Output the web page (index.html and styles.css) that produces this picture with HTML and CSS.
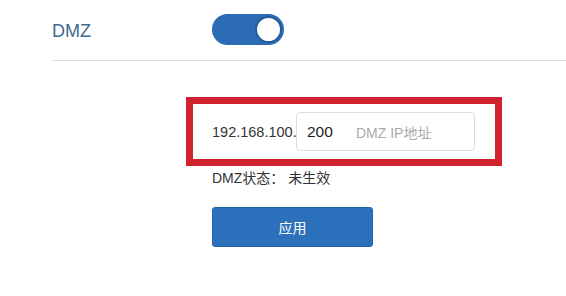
FILE: index.html
```html
<!DOCTYPE html>
<html lang="zh-CN">
<head>
    <meta charset="UTF-8">
    <title>DMZ</title>
    <link rel="stylesheet" href="styles.css">
</head>
<body>

    <div class="row">
        <div class="row-label">DMZ</div>
        <div class="switch on"><span class="knob"></span></div>
    </div>

    <div class="form">
        <div class="highlight">
            <span class="prefix">192.168.100.</span>
            <div class="ip-input">
                <span class="value">200</span>
                <span class="hint">DMZ IP地址</span>
            </div>
        </div>
        <div class="status">DMZ状态： 未生效</div>
        <button class="btn">应用</button>
    </div>

</body>
</html>
```

FILE: styles.css
```css
body {
    margin: 0;
    background: #fff;
    font-family: "Liberation Sans", "Noto Sans CJK SC", sans-serif;
    font-size: 14px;
    color: #333;
}
.row {
    display: flex;
    align-items: center;
    height: 60px;
    margin-left: 52px;
    border-bottom: 1px solid #dcdcdc;
}
.row-label {
    width: 160px;
    padding-top: 3px;
    font-size: 18px;
    color: #3d6a90;
}
.switch {
    position: relative;
    width: 72px;
    height: 31px;
    border-radius: 16px;
    background: #2b6cb5;
    margin-top: -1px;
}
.knob {
    position: absolute;
    top: 2px;
    right: 2px;
    width: 23px;
    height: 23px;
    border-radius: 50%;
    background: #fff;
    border: 2px solid #245d9c;
}
.form {
    padding-left: 212px;
}
.highlight {
    display: flex;
    align-items: center;
    margin-top: 36px;
    margin-left: -26px;
    padding: 8px 0 8px 19px;
    border: 7px solid #cf2330;
    width: 283px;
}
.prefix {
    width: 84px;
    font-size: 14.5px;
}
.ip-input {
    display: flex;
    align-items: center;
    width: 167px;
    height: 37px;
    padding-left: 10px;
    border: 1px solid #dcdcdc;
    border-radius: 4px;
}
.value {
    width: 49px;
    font-size: 15.5px;
    color: #222;
}
.hint {
    color: #aaa;
}
.status {
    margin-top: 2px;
    line-height: 20px;
}
.btn {
    display: block;
    margin-top: 19px;
    width: 161px;
    height: 40px;
    border: 1px solid #2364a8;
    border-radius: 3px;
    background: #2b70bb;
    color: #fff;
    font-family: inherit;
    font-size: 14px;
}
```
